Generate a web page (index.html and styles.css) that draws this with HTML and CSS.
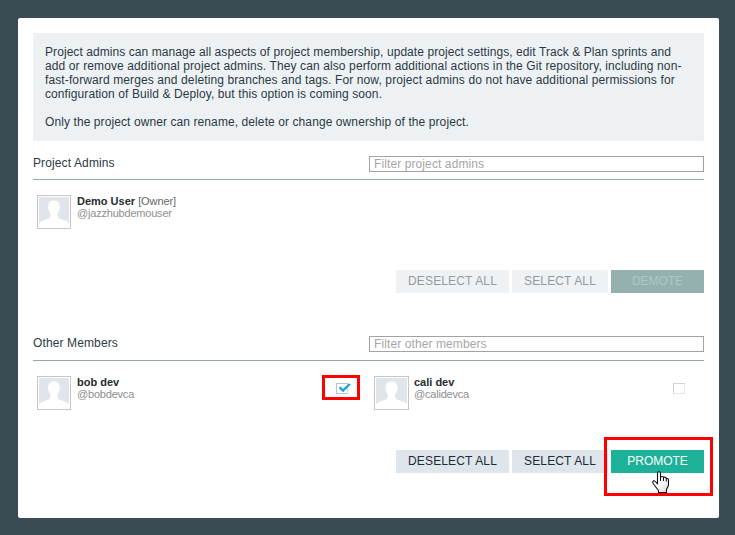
FILE: index.html
```
<!DOCTYPE html>
<html lang="en">
<head>
<meta charset="utf-8">
<title>Project members</title>
<link rel="stylesheet" href="styles.css">
</head>
<body>
<svg class="defs" width="0" height="0">
  <symbol id="person" viewBox="0 0 30 30" preserveAspectRatio="none">
    <path fill="#dfe5eb" d="M0 0h30v30H0z"/>
    <path fill="#fff" d="M0 30v-3.500c1.500-2 4-3 7.500-4.200 2.500-.8 3.800-1.500 3.900-3.300V16.500C10.600 15.500 10.300 14 10 12.700 9 12.300 8.600 10 9.300 9.400 9 5.500 11.500 3.500 15 3.500s6 2 5.700 5.900c.7.600.3 2.900-.7 3.300-.3 1.300-.6 2.800-1.400 3.800V19c.1 1.800 1.400 2.500 3.900 3.300 3.500 1.200 6 2.200 7.500 4.200V30z"/>
  </symbol>
</svg>
<main class="panel">
  <section class="info">
    <p><span class="line-snug">Project admins can manage all aspects of project membership, update project settings, edit Track &amp; Plan sprints and</span><br><span class="line-wide">add or remove additional project admins. They can also perform additional actions in the Git repository, including non-</span><br><span class="line-wide">fast-forward merges and deleting branches and tags. For now, project admins do not have additional permissions for</span><br>configuration of Build &amp; Deploy, but this option is coming soon.</p>
    <p>Only the project owner can rename, delete or change ownership of the project.</p>
  </section>

  <section class="group">
    <header class="group-head">
      <h2>Project Admins</h2>
      <input class="filter" type="text" placeholder="Filter project admins">
    </header>
    <div class="members">
      <div class="member">
        <svg class="avatar"><use href="#person"/></svg>
        <div class="who"><b>Demo User</b> <span class="role">[Owner]</span><div class="handle">@jazzhubdemouser</div></div>
      </div>
    </div>
    <div class="actions disabled">
      <button class="btn deselect">DESELECT ALL</button>
      <button class="btn select">SELECT ALL</button>
      <button class="btn primary">DEMOTE</button>
    </div>
  </section>

  <section class="group others">
    <header class="group-head">
      <h2>Other Members</h2>
      <input class="filter" type="text" placeholder="Filter other members">
    </header>
    <div class="members">
      <div class="member">
        <svg class="avatar"><use href="#person"/></svg>
        <div class="who"><b>bob dev</b><div class="handle">@bobdevca</div></div>
        <div class="check checked">
          <svg class="tick" width="13" height="10" viewBox="0 0 13 10"><path d="M1.500 4.200L5 7.600 11.800 1" fill="none" stroke="#12a5cf" stroke-width="2.300"/></svg>
          <span class="mark mark-check"></span>
        </div>
      </div>
      <div class="member">
        <svg class="avatar wide"><use href="#person"/></svg>
        <div class="who"><b>cali dev</b><div class="handle">@calidevca</div></div>
        <div class="check"></div>
      </div>
    </div>
    <div class="actions">
      <button class="btn deselect">DESELECT ALL</button>
      <button class="btn select">SELECT ALL</button>
      <div class="promote">
        <button class="btn primary">PROMOTE</button>
        <span class="mark mark-promote"></span>
        <svg class="cursor" width="18" height="23" viewBox="0 0 18 23">
          <defs><linearGradient id="hand" x1="0" y1="0" x2="1" y2="1"><stop offset=".5" stop-color="#fff"/><stop offset="1" stop-color="#d5d5d5"/></linearGradient></defs>
          <path d="M5.500 13V2.500Q5.500.7 7 .7T8.500 2.500V6.200Q10.500 4.800 11.500 6.400 13.500 5.500 14.300 7.400 16.500 7 16.500 9.500V14.500L14.500 18.500V21.500H6.500V19.500L1.500 13Q.2 10.500 1.500 9.800T5.500 13Z" fill="url(#hand)" stroke="#0b0b1c" stroke-width="1.100" stroke-linejoin="round"/>
          <path d="M8.500 6v4M11.500 6.500v3.500M14.300 7.500v3" fill="none" stroke="#0b0b1c"/>
        </svg>
      </div>
    </div>
  </section>
</main>
</body>
</html>
```
FILE: styles.css
```
* { box-sizing: border-box; }
body {
  margin: 0;
  padding: 18px 16px 17px 18px;
  background: #3b4b53;
  color: #2b3a44;
  font: 12px/14px "Liberation Sans", Arial, sans-serif;
}
.defs { display: none; }
.panel {
  height: 500px;
  padding: 15px;
  background: #fff;
  border-radius: 2px;
}
.info {
  height: 108px;
  padding: 12px;
  background: #edf1f4;
  border-radius: 2px;
  letter-spacing: 0.09px;
  white-space: nowrap;
}
.line-snug { letter-spacing: 0.072px; }
.line-wide { letter-spacing: 0.112px; }
.info p { margin: 0 0 14px; }
.group { height: 180px; padding-top: 15px; }
.group-head {
  display: flex;
  justify-content: space-between;
  height: 24px;
  border-bottom: 1px solid #94a9ad;
}
h2 {
  margin: 0;
  font-size: 12px;
  font-weight: normal;
  line-height: 14px;
  letter-spacing: 0.12px;
}
.filter {
  width: 335px;
  height: 16px;
  padding: 0 4px;
  border: 1px solid #a3a3a3;
  border-radius: 0;
  background: #fff;
  font: 12px/14px "Liberation Sans", Arial, sans-serif;
  letter-spacing: 0.1px;
}
.filter::placeholder { color: #a6a6a6; }
.members {
  display: grid;
  grid-template-columns: 337px 334px;
  height: 90px;
  padding-top: 15px;
}
.member { display: flex; padding-left: 4px; }
.avatar {
  flex: none;
  width: 34px;
  height: 34px;
  padding: 1px;
  border: 1px solid #c6c6c6;
}
.wide { width: 35px; margin-right: -1px; }
.who {
  margin-left: 6px;
  color: #262b2e;
  font-size: 11px;
  line-height: 12px;
}
.role { color: #666; letter-spacing: -0.1px; }
.handle { color: #8e8e8e; letter-spacing: -0.2px; }
.check {
  position: relative;
  width: 12px;
  height: 11px;
  margin: 7px 19px 0 auto;
  border: 1px solid #d0d0d0;
  border-right-color: #e3e3e3;
  border-bottom-color: #e3e3e3;
}
.checked {
  margin-right: 22px;
  border-color: #b9c3cb #d5dce1 #b9c3cb #b9c3cb;
}
.tick { position: absolute; left: 1px; top: -1px; }
.mark { position: absolute; border: 3px solid #f00; }
.mark-check { left: -15px; top: -9px; width: 38px; height: 25px; }
.actions { display: flex; justify-content: flex-end; gap: 3px; height: 23px; }
.btn {
  display: block;
  height: 23px;
  padding: 0;
  border: 0;
  background: #dee5eb;
  color: #222b31;
  font: 12px/23px "Liberation Sans", Arial, sans-serif;
  letter-spacing: 0.15px;
}
.deselect { width: 113px; }
.select { width: 96px; }
.primary { width: 93px; background: #1cb198; color: #fff; letter-spacing: -0.05px; }
.disabled .btn { background: #eef2f5; color: #949a9d; }
.disabled .primary { background: #94b1b0; color: #afc5c9; }
.promote { position: relative; }
.mark-promote { left: -7px; top: -13px; width: 109px; height: 59px; }
.cursor { position: absolute; left: 41px; top: 21px; }
.others .members { height: 89px; padding-top: 15px; }
.others .group-head { height: 25px; }
```
